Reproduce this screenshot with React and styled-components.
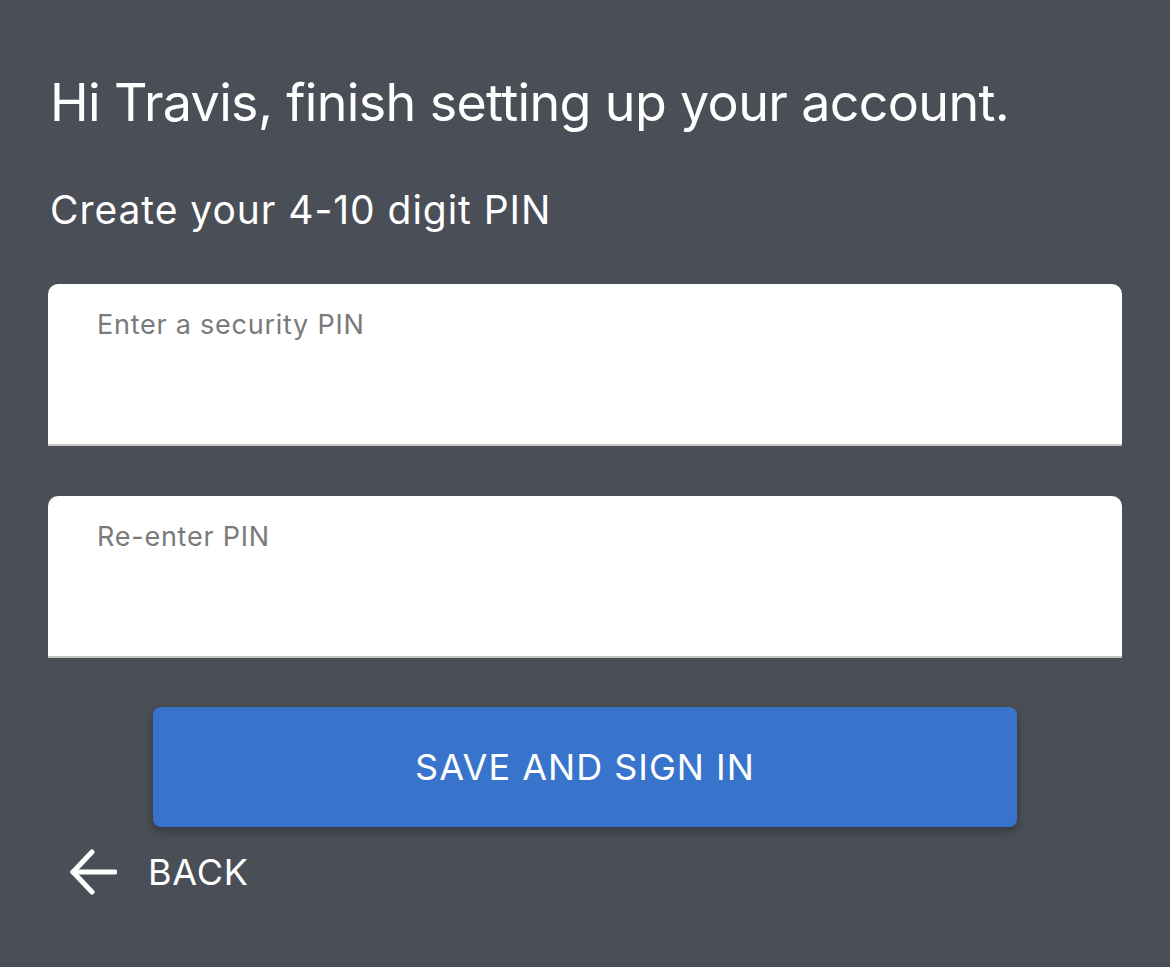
import React from "react";
import styled, { createGlobalStyle } from "styled-components";

const Global = createGlobalStyle`
  html, body { margin: 0; padding: 0; background: #4a4e56; }
  body { font-family: Inter, "Noto Sans", sans-serif; }
`;

const Page = styled.div`
  width: 1170px;
  height: 967px;
  background: #4a4e56;
  box-sizing: border-box;
  padding: 72px 48px 0 48px;
  display: flex;
  flex-direction: column;
`;

const Heading = styled.h1`
  margin: 0 0 0 2px;
  font-weight: 400;
  font-size: 52px;
  line-height: 62px;
  color: #fff;
  letter-spacing: -0.65px;
`;

const Sub = styled.p`
  margin: 52px 0 0 2px;
  font-size: 39px;
  line-height: 48px;
  color: #fff;
  font-weight: 400;
  letter-spacing: 0.95px;
`;

const Field = styled.div`
  margin-top: 50px;
  height: 162px;
  background: #fff;
  border-radius: 10px 10px 0 0;
  border-bottom: 2px solid #c4c4c4;
  box-sizing: border-box;
  padding: 25px 0 0 49px;
`;

const Label = styled.div`
  font-size: 27px;
  line-height: 32px;
  color: #7a7a7a;
  letter-spacing: 0.75px;
`;

const Button = styled.button`
  margin: 49px auto 0;
  width: 864px;
  height: 120px;
  border: none;
  border-radius: 8px;
  background: #3874cc;
  color: #fff;
  font-family: Inter, "Noto Sans", sans-serif;
  font-size: 36px;
  letter-spacing: 1px;
  box-shadow: 0 4px 10px rgba(0, 0, 0, 0.3);
  display: flex;
  align-items: center;
  justify-content: center;
`;

const Back = styled.div`
  margin-top: 22px;
  margin-left: 21px;
  display: flex;
  align-items: center;
  gap: 31px;
  color: #fff;
  font-size: 36px;
  letter-spacing: 0.8px;
  height: 46px;
`;

export default function App() {
  return (
    <>
      <Global />
      <Page>
        <Heading>Hi Travis, finish setting up your account.</Heading>
        <Sub>Create your 4-10 digit PIN</Sub>
        <Field>
          <Label>Enter a security PIN</Label>
        </Field>
        <Field>
          <Label>Re-enter PIN</Label>
        </Field>
        <Button>SAVE AND SIGN IN</Button>
        <Back>
          <svg width="48" height="46" viewBox="0 0 48 46" fill="none" stroke="#fff" strokeWidth="5" strokeLinecap="round" strokeLinejoin="round">
            <path d="M46 23 H4" />
            <path d="M23 3 L4 23 L23 43" />
          </svg>
          <span>BACK</span>
        </Back>
      </Page>
    </>
  );
}
